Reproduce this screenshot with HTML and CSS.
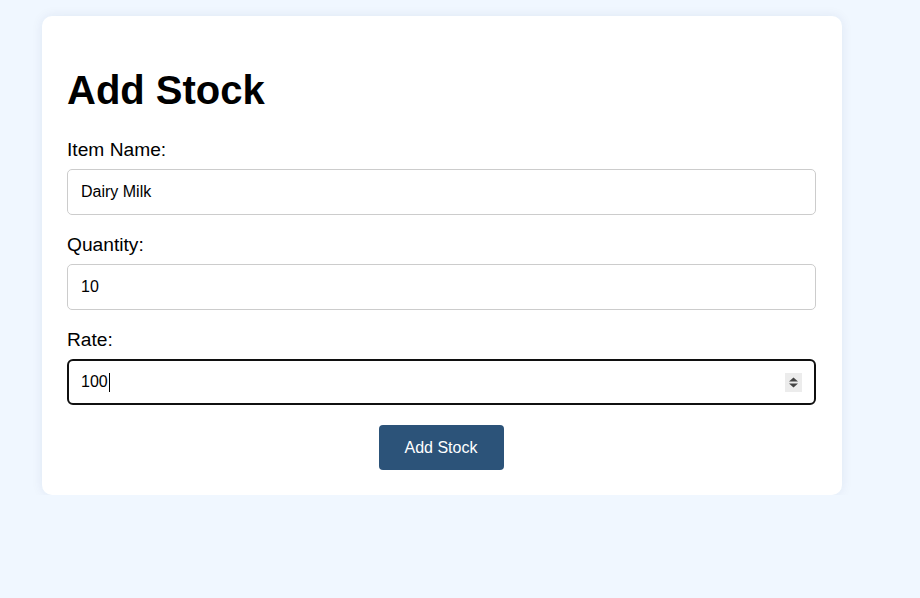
FILE: index.html
```html
<!DOCTYPE html>
<html>
<head>
<meta charset="utf-8">
<title>Add Stock</title>
<link rel="stylesheet" href="styles.css">
</head>
<body>
<main class="page">
  <form class="card">
    <h1 class="title">Add Stock</h1>
    <div class="group">
      <label class="label" for="item">Item Name:</label>
      <input class="field" id="item" type="text" value="Dairy Milk">
    </div>
    <div class="group">
      <label class="label" for="qty">Quantity:</label>
      <input class="field" id="qty" type="text" value="10">
    </div>
    <div class="group">
      <label class="label">Rate:</label>
      <div class="field field-focus">
        <span class="value">100</span><span class="caret"></span>
        <span class="spacer"></span>
        <span class="spin">
          <svg width="11" height="15" viewBox="0 0 11 15"><path d="M5.5 2.5 L10 6.5 L1 6.5 Z M1 8.5 L10 8.5 L5.5 12.5 Z" fill="#444"/></svg>
        </span>
      </div>
    </div>
    <div class="actions">
      <button class="btn" type="button">Add Stock</button>
    </div>
  </form>
</main>
</body>
</html>
```
FILE: styles.css
```css
html, body {
  margin: 0;
  padding: 0;
  background: #f0f7ff;
  font-family: "Liberation Sans", Arial, sans-serif;
  color: #000;
}
.page {
  padding: 16px 0 0 42px;
}
.card {
  width: 750px;
  background: #fff;
  border-radius: 10px;
  box-shadow: 0 0 12px rgba(0, 40, 100, 0.08);
  padding: 23px 25px 25px 25px;
  margin: 0;
}
.title {
  font-size: 40px;
  line-height: 46px;
  font-weight: bold;
  margin: 28px 0 26px 0;
}
.group {
  margin-bottom: 19px;
}
.label {
  display: block;
  font-size: 19.2px;
  line-height: 22px;
  margin-bottom: 8px;
}
.field {
  display: block;
  box-sizing: border-box;
  width: 749px;
  height: 46px;
  padding: 0 13px;
  border: 1px solid #ccc;
  border-radius: 5px;
  font-family: "Liberation Sans", Arial, sans-serif;
  font-size: 16px;
  color: #000;
  background: #fff;
  outline: none;
}
.field-focus {
  display: flex;
  align-items: center;
  border: 2px solid #101010;
  border-radius: 6px;
  padding: 0 12px;
}
.value {
  line-height: 18px;
}
.caret {
  display: inline-block;
  width: 1px;
  height: 19px;
  background: #000;
  margin-left: 1px;
}
.spacer {
  flex: 1;
}
.spin {
  display: flex;
  align-items: center;
  justify-content: center;
  width: 17px;
  height: 19px;
  margin-right: 0;
  background: #ececec;
}
.actions {
  display: flex;
  justify-content: center;
  padding-top: 1px;
}
.btn {
  width: 125px;
  height: 45px;
  background: #2c5379;
  color: #fff;
  border: none;
  border-radius: 4px;
  font-family: "Liberation Sans", Arial, sans-serif;
  font-size: 16px;
  padding: 0;
  margin-right: 2px;
}
```
